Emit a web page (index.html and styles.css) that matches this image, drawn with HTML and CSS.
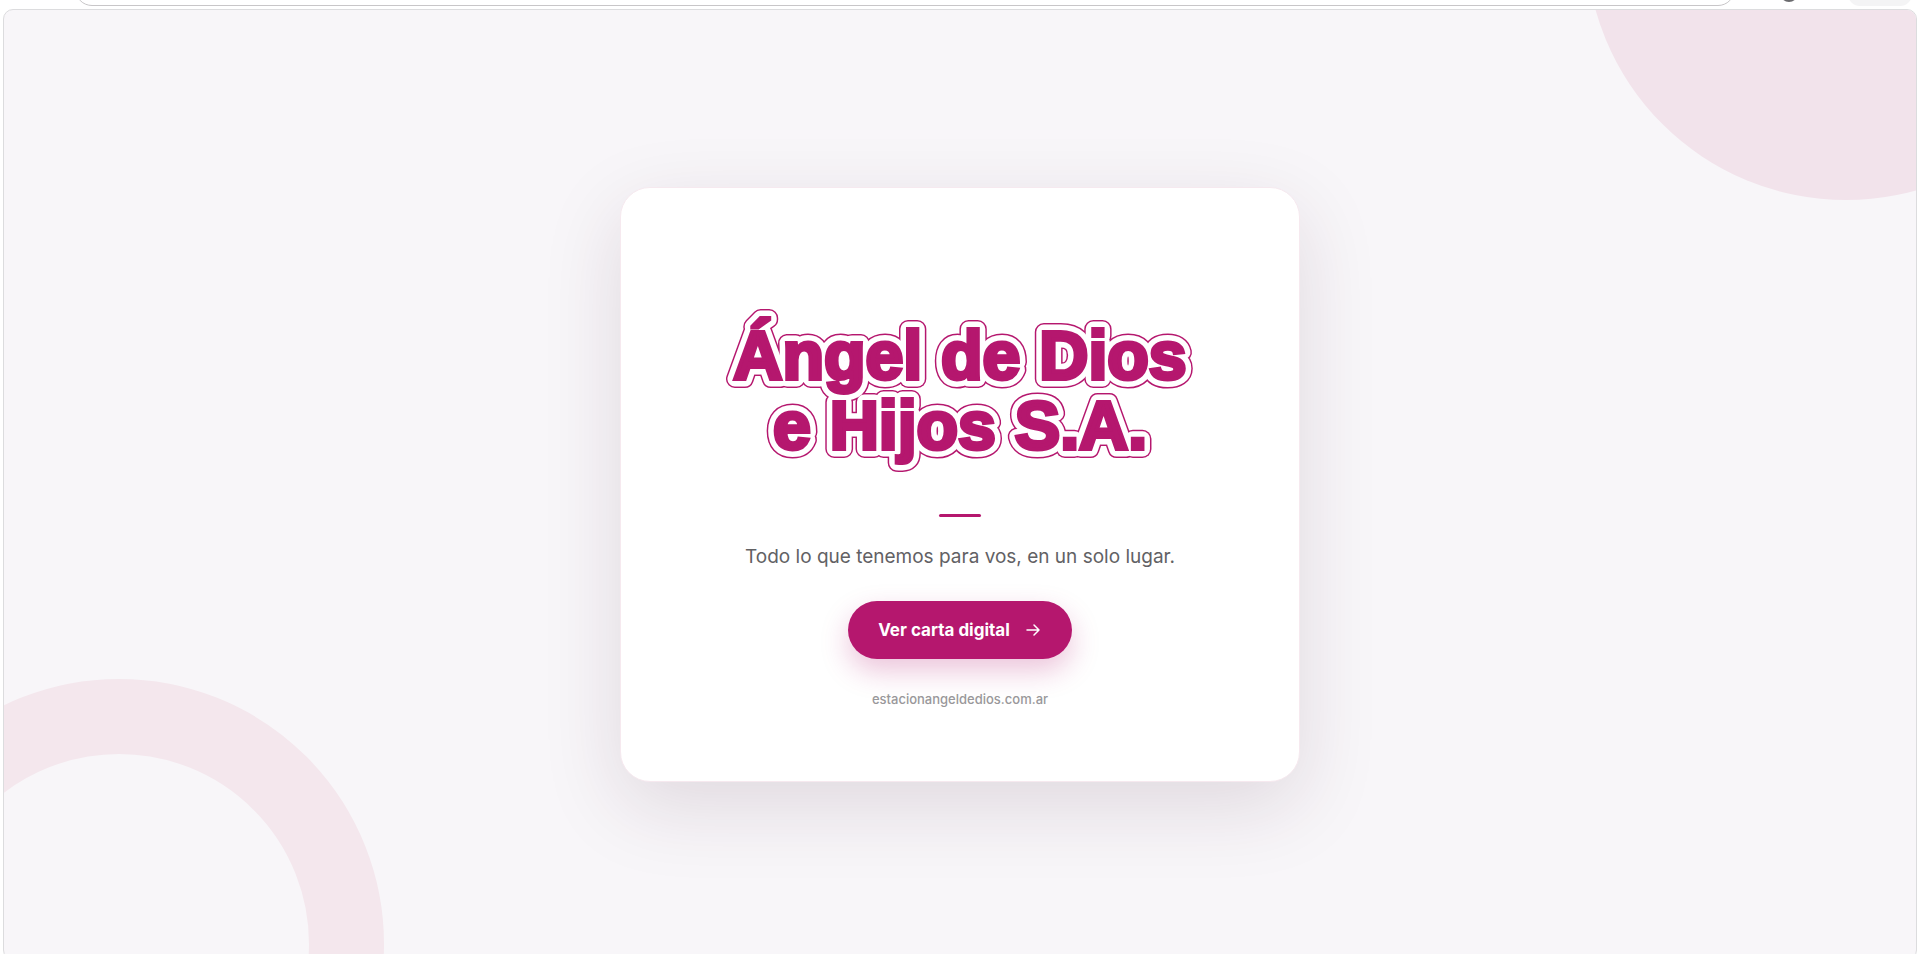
FILE: index.html
```html
<!DOCTYPE html>
<html lang="es">
<head>
  <meta charset="UTF-8">
  <meta name="viewport" content="width=device-width, initial-scale=1.0">
  <title>Ángel de Dios e Hijos S.A.</title>
  <link rel="stylesheet" href="styles.css">
</head>
<body>

  <div class="toolbar">
    <div class="address"></div>
    <div class="dot"></div>
    <div class="chip"></div>
  </div>

  <main class="page">
    <div class="circle"></div>
    <div class="ring"></div>

    <section class="card">
      <h1 class="logo">
        <svg width="480" height="166" viewBox="0 0 480 166">
          <use href="#brand" class="logo-outline" />
          <use href="#brand" class="logo-gap" />
          <g class="logo-fill">
            <text id="brand" text-anchor="middle"><tspan x="240" y="73">Ángel de Dios</tspan><tspan x="240" y="143">e Hijos S.A.</tspan></text>
          </g>
        </svg>
      </h1>
      <div class="divider"></div>
      <p class="tagline">Todo lo que tenemos para vos, en un solo lugar.</p>
      <a class="button" href="#carta">
        Ver carta digital
        <svg width="18" height="18" viewBox="0 0 18 18" fill="none" stroke="currentColor" stroke-width="1.5" stroke-linecap="round" stroke-linejoin="round">
          <path d="M3 9h12M10 4l5 5-5 5" />
        </svg>
      </a>
      <p class="domain">estacionangeldedios.com.ar</p>
    </section>
  </main>

</body>
</html>
```
FILE: styles.css
```css
* {
  box-sizing: border-box;
}

body {
  margin: 0;
  height: 100vh;
  display: flex;
  flex-direction: column;
  overflow: hidden;
  background-color: #fff;
  font-family: Inter, sans-serif;
}

/* bottom edge of the browser bar */
.toolbar {
  flex: none;
  height: 9px;
  padding: 0 7px 3px 75px;
  display: flex;
  align-items: flex-end;
  overflow: hidden;
}

.address {
  flex: 1;
  height: 34px;
  border: 1px solid #c8c6c8;
  border-radius: 17px;
}

.dot {
  width: 18px;
  height: 18px;
  margin: 0 50px 4px 45px;
  border: 2px solid #6b6b6e;
  border-radius: 50%;
}

.chip {
  width: 64px;
  height: 30px;
  border-radius: 12px;
  background-color: #f4f4f5;
}

.page {
  position: relative;
  flex: 1;
  margin: 0 2px -6px 3px;
  display: flex;
  align-items: center;
  justify-content: center;
  overflow: hidden;
  border: 1px solid #dcdcde;
  border-radius: 10px;
  background-color: #f8f6f9;
}

.circle {
  position: absolute;
  top: -330px;
  right: -190px;
  width: 520px;
  height: 520px;
  border-radius: 50%;
  background-color: #f2e3eb;
}

.ring {
  position: absolute;
  left: -150px;
  bottom: -250px;
  width: 530px;
  height: 530px;
  border: 75px solid #f4e7ed;
  border-radius: 50%;
}

.card {
  position: relative;
  width: 100%;
  max-width: 680px;
  padding: 118px 40px 73px;
  display: flex;
  flex-direction: column;
  align-items: center;
  border: 1px solid #f6e9ef;
  border-radius: 30px;
  background-color: #fff;
  box-shadow: 0 24px 80px rgba(60, 20, 50, 0.13);
}

.logo {
  margin: 0;
  font-family: "Liberation Sans", Arial, sans-serif;
  font-size: 68px;
  font-weight: bold;
}

.logo svg {
  display: block;
  overflow: visible;
  stroke-linejoin: round;
}

.logo-outline {
  fill: #b5176e;
  stroke: #b5176e;
  stroke-width: 18px;
}

.logo-gap {
  fill: #fff;
  stroke: #fff;
  stroke-width: 15px;
}

.logo-fill {
  fill: #b5176e;
  stroke: #b5176e;
  stroke-width: 4px;
  stroke-linejoin: miter;
}

.divider {
  width: 42px;
  height: 3px;
  margin-top: 42px;
  border-radius: 2px;
  background-color: #b5176e;
}

.tagline {
  margin: 27px 0 0;
  color: #626164;
  font-size: 19px;
  line-height: 26px;
}

.button {
  height: 58px;
  margin-top: 31px;
  padding: 0 30px;
  display: flex;
  align-items: center;
  gap: 14px;
  border-radius: 29px;
  background-color: #b5176e;
  box-shadow: 0 12px 28px rgba(181, 23, 110, 0.25);
  color: #fff;
  font-size: 17px;
  font-weight: 700;
  text-decoration: none;
}

.button:hover {
  background-color: #9c115d;
}

.domain {
  margin: 31px 0 0;
  color: #99979a;
  font-size: 13px;
  font-weight: 500;
  line-height: 18px;
}
```
